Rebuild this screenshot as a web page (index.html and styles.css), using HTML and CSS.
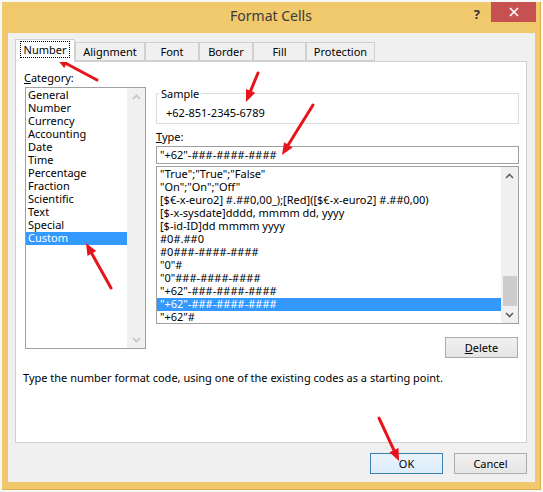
FILE: index.html
```html
<!DOCTYPE html>
<html>
<head>
<meta charset="utf-8">
<link rel="stylesheet" href="styles.css">
</head>
<body>
<div class="window">
  <div class="titlebar">
    <div></div>
    <div class="title">Format Cells</div>
    <div class="controls">
      <span class="help">?</span>
      <span class="close"><svg width="10" height="10" viewBox="0 0 10 10"><path d="M1 1L9 9M9 1L1 9" stroke="#fff" stroke-width="1.6"/></svg></span>
    </div>
  </div>
  <div class="client">
    <div class="tabs">
      <div class="tab active w-number"><span class="focus">Number</span></div>
      <div class="tab w-align">Alignment</div>
      <div class="tab w-font">Font</div>
      <div class="tab w-border">Border</div>
      <div class="tab w-fill">Fill</div>
      <div class="tab w-prot">Protection</div>
    </div>
    <div class="panel">
      <div class="columns">
        <div class="left">
          <div class="label"><u>C</u>ategory:</div>
          <div class="listbox cat">
            <ul class="items">
              <li>General</li>
              <li>Number</li>
              <li>Currency</li>
              <li>Accounting</li>
              <li>Date</li>
              <li>Time</li>
              <li>Percentage</li>
              <li>Fraction</li>
              <li>Scientific</li>
              <li>Text</li>
              <li>Special</li>
              <li class="sel">Custom</li>
            </ul>
            <div class="scroll disabled">
              <div class="arrow"><svg width="9" height="6" viewBox="0 0 9 6"><path d="M1 5L4.5 1.5L8 5" fill="none" stroke="#c4c4c4" stroke-width="1.6"/></svg></div>
              <div class="track"></div>
              <div class="arrow"><svg width="9" height="6" viewBox="0 0 9 6"><path d="M1 1L4.5 4.5L8 1" fill="none" stroke="#c4c4c4" stroke-width="1.6"/></svg></div>
            </div>
          </div>
        </div>
        <div class="right">
          <fieldset class="sample">
            <legend>Sample</legend>
            <div class="sample-value">+62-851-2345-6789</div>
          </fieldset>
          <div class="label type-label"><u>T</u>ype:</div>
          <div class="input">"+62"-###-####-####</div>
          <div class="listbox types">
            <ul class="items">
              <li>"True";"True";"False"</li>
              <li>"On";"On";"Off"</li>
              <li>[$€-x-euro2] #.##0,00_);[Red]([$€-x-euro2] #.##0,00)</li>
              <li>[$-x-sysdate]dddd, mmmm dd, yyyy</li>
              <li>[$-id-ID]dd mmmm yyyy</li>
              <li>#0#.##0</li>
              <li>#0###-####-####</li>
              <li>"0"#</li>
              <li>"0"###-####-####</li>
              <li>"+62"-###-####-####</li>
              <li class="sel">"+62"-###-####-####</li>
              <li>"+62"#</li>
            </ul>
            <div class="scroll">
              <div class="arrow"><svg width="9" height="6" viewBox="0 0 9 6"><path d="M1 5L4.5 1.5L8 5" fill="none" stroke="#606060" stroke-width="1.6"/></svg></div>
              <div class="track"><div class="thumb"></div></div>
              <div class="arrow"><svg width="9" height="6" viewBox="0 0 9 6"><path d="M1 1L4.5 4.5L8 1" fill="none" stroke="#606060" stroke-width="1.6"/></svg></div>
            </div>
          </div>
          <div class="delete-row"><button class="btn delete"><u>D</u>elete</button></div>
        </div>
      </div>
      <p class="hint">Type the number format code, using one of the existing codes as a starting point.</p>
    </div>
    <div class="buttons">
      <button class="btn default">OK</button>
      <button class="btn">Cancel</button>
    </div>
  </div>
</div>
<svg class="annot" width="543" height="492" viewBox="0 0 543 492">
  <g stroke="#e8141c" stroke-width="3" stroke-linecap="round" fill="none">
    <line x1="97" y1="80" x2="66.6" y2="63.7"/>
    <line x1="258" y1="73" x2="250.6" y2="90.9"/>
    <line x1="313" y1="105" x2="288.3" y2="144.8"/>
    <line x1="111" y1="288" x2="91.8" y2="253.5"/>
    <line x1="379" y1="418" x2="393.9" y2="450.1"/>
  </g>
  <g fill="#e8141c">
    <polygon points="56,58 69.0,59.3 64.2,68.1"/>
    <polygon points="246,102 246.0,89.0 255.2,92.8"/>
    <polygon points="282,155 284.1,142.2 292.6,147.4"/>
    <polygon points="86,243 96.2,251.1 87.5,255.9"/>
    <polygon points="399,461 389.4,452.2 398.5,448.0"/>
  </g>
</svg>
</body>
</html>
```
FILE: styles.css
```css
* { box-sizing: border-box; }
html, body { margin: 0; padding: 0; }
body {
  width: 543px;
  height: 492px;
  background: #f7f7f7;
  font-family: "Noto Sans", "Open Sans", sans-serif;
  font-size: 11px;
  color: #000;
  position: relative;
  overflow: hidden;
}
.window {
  position: absolute;
  left: 2px;
  top: 2px;
  width: 539px;
  height: 488px;
  background: #f1c96d;
  border: 1px solid #dcae4c;
  border-top: none;
  border-left: none;
  display: flex;
  flex-direction: column;
}
.titlebar {
  height: 31px;
  display: grid;
  grid-template-columns: 1fr auto 1fr;
  align-items: start;
}
.title {
  font-size: 14px;
  line-height: 16px;
  color: #3a3a3a;
  padding-top: 6px;
  white-space: nowrap;
}
.controls {
  display: flex;
  justify-content: flex-end;
  align-items: flex-start;
  padding-right: 4px;
}
.help {
  font-weight: bold;
  font-size: 13px;
  line-height: 14px;
  color: #333;
  margin-top: 5px;
  margin-right: 11px;
}
.close {
  width: 45px;
  height: 20px;
  background: #c75050;
  display: flex;
  align-items: center;
  justify-content: center;
}
.client {
  flex: 1;
  margin: 0 5px 7px 6px;
  background: #f0f0f0;
  padding: 6px 8px 8px 7px;
  display: flex;
  flex-direction: column;
}
.tabs {
  display: flex;
  align-items: flex-end;
  height: 23px;
}
.tab {
  height: 19px;
  margin-bottom: 1px;
  border: 1px solid #d0d0d0;
  background: #f0f0f0;
  display: flex;
  align-items: center;
  justify-content: center;
  line-height: 13px;
  padding-bottom: 1px;
}
.tab.active {
  height: 23px;
  margin-bottom: 0;
  background: #fff;
  border-bottom: none;
  position: relative;
  z-index: 1;
  padding-bottom: 3px;
}
.focus {
  outline: 1px dotted #000;
  outline-offset: 1px;
  padding: 0 2px;
}
.w-number { width: 60px; }
.w-align { width: 70px; }
.w-font { width: 54px; }
.w-border { width: 54px; }
.w-fill { width: 53px; }
.w-prot { width: 69px; }
.panel {
  flex: 1;
  margin-top: -1px;
  background: #fff;
  border: 1px solid #d0d0d0;
  padding: 10px 6px 0 8px;
}
.columns {
  display: flex;
  gap: 10px;
}
.left { width: 122px; }
.right { width: 363px; }
.label {
  line-height: 11px;
  height: 13px;
  white-space: nowrap;
}
.label u { text-decoration-thickness: 1px; text-underline-offset: 1px; }
.listbox {
  border: 1px solid #a0a0a0;
  display: flex;
  background: #fff;
}
.cat {
  margin-top: 2px;
  margin-left: 1px;
  height: 262px;
}
.items {
  list-style: none;
  margin: 0;
  padding: 1px 0 0 0;
  flex: 1;
  min-width: 0;
}
.items li {
  height: 13px;
  line-height: 11px;
  padding-left: 3px;
  white-space: nowrap;
}
.cat .items li { padding-left: 2px; }
.items li.sel {
  background: #3399ff;
  color: #fff;
}
.scroll {
  width: 17px;
  background: #f0f0f0;
  display: flex;
  flex-direction: column;
}
.cat .scroll { width: 18px; }
.arrow {
  height: 17px;
  display: flex;
  align-items: center;
  justify-content: center;
}
.track {
  flex: 1;
  position: relative;
}
.thumb {
  position: absolute;
  left: 2px;
  right: 1px;
  top: 92px;
  height: 30px;
  background: #cdcdcd;
}
.sample {
  margin: 15px 0 0 0;
  padding: 0 9px 4px 9px;
  border: 1px solid #dcdcdc;
  min-width: 0;
}
.sample legend {
  padding: 0 2px;
  margin-left: -7px;
  line-height: 13px;
}
.sample-value {
  margin-top: 6px;
  line-height: 13px;
  height: 13px;
}
.type-label { margin-top: 7px; }
.input {
  margin-top: 2px;
  height: 18px;
  border: 1px solid #a0a0a0;
  line-height: 15px;
  padding-left: 3px;
  white-space: nowrap;
}
.types {
  margin-top: 2px;
  height: 158px;
}
.delete-row {
  display: flex;
  justify-content: flex-end;
  margin-top: 13px;
  padding-right: 1px;
}
.btn {
  font-family: inherit;
  font-size: 11px;
  color: #000;
  width: 73px;
  height: 21px;
  border: 1px solid #acacac;
  background: linear-gradient(#f0f0f0, #e5e5e5);
  padding: 0 0 1px 0;
  line-height: 17px;
}
.btn.default {
  border-color: #3c7fb1;
  background: linear-gradient(#eaf3fb, #dcecfc);
}
.hint {
  margin: 13px 0 0 -1px;
  line-height: 13px;
  white-space: nowrap;
}
.buttons {
  display: flex;
  justify-content: flex-end;
  gap: 11px;
  margin-top: 10px;
}
.annot {
  position: absolute;
  left: 0;
  top: 0;
  pointer-events: none;
}
```
